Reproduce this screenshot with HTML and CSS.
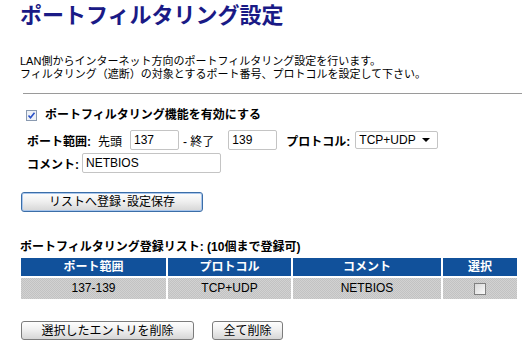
FILE: index.html
```html
<!DOCTYPE html>
<html lang="ja">

<head>
    <meta charset="UTF-8">
    <title>ポートフィルタリング設定</title>
    <link rel="stylesheet" href="styles.css">
</head>

<body>

    <div class="page">
        <h1 class="title">ポートフィルタリング設定</h1>
        <p class="desc">
            LAN側からインターネット方向のポートフィルタリング設定を行います。<br>
            フィルタリング（遮断）の対象とするポート番号、プロトコルを設定して下さい。
        </p>
        <hr class="rule">

        <!-- Filter settings -->
        <form class="settings" onsubmit="return false">
            <label class="enable">
                <input type="checkbox" class="check" checked>
                <span>ポートフィルタリング機能を有効にする</span>
            </label>
            <div class="row">
                <span class="label">ポート範囲:</span>
                <span class="text first">先頭</span>
                <input type="text" class="field port" value="137">
                <span class="text dash">- 終了</span>
                <input type="text" class="field port" value="139">
                <span class="label proto">プロトコル:</span>
                <select class="select">
                    <option>TCP+UDP</option>
                    <option>TCP</option>
                    <option>UDP</option>
                </select>
            </div>
            <div class="row">
                <span class="label">コメント:</span>
                <input type="text" class="field comment" value="NETBIOS">
            </div>
            <button class="btn btn-save">リストへ登録･設定保存</button>
        </form>

        <!-- Registered list -->
        <h2 class="list-title">ポートフィルタリング登録リスト: (10個まで登録可)</h2>
        <table class="list">
            <tr>
                <th class="col-port">ポート範囲</th>
                <th class="col-proto">プロトコル</th>
                <th class="col-comment">コメント</th>
                <th class="col-sel">選択</th>
            </tr>
            <tr>
                <td>137-139</td>
                <td>TCP+UDP</td>
                <td>NETBIOS</td>
                <td><input type="checkbox" class="pick"></td>
            </tr>
        </table>

        <div class="actions">
            <button class="btn btn-del">選択したエントリを削除</button>
            <button class="btn btn-all">全て削除</button>
        </div>
    </div>

</body>

</html>
```

FILE: styles.css
```css
* {
    margin: 0;
    padding: 0;
    box-sizing: border-box;
}

body {
    font-family: "Liberation Sans", "Noto Sans CJK JP", sans-serif;
    font-size: 12px;
    color: #000;
    background: #fff;
}

.page {
    padding: 0 5px 0 20px;
}

.title {
    padding-top: 3px;
    font-size: 22px;
    line-height: 26px;
    font-weight: bold;
    color: #1a1a86;
}

.desc {
    margin-top: 26px;
    font-size: 11px;
    line-height: 13px;
}

.rule {
    margin: 12px 0 0 3px;
    border: none;
    border-top: 1px solid #9a9a9a;
    height: 0;
}

.settings {
    display: flex;
    flex-direction: column;
    align-items: flex-start;
}

.enable {
    display: flex;
    align-items: center;
    margin: 13px 0 0 6px;
    line-height: 16px;
    font-weight: bold;
}

.check {
    appearance: none;
    width: 11px;
    height: 11px;
    margin-right: 8px;
    border: 1px solid #8a9ab0;
    background: #eef1f6 url("data:image/svg+xml,%3Csvg xmlns='http://www.w3.org/2000/svg' viewBox='0 0 9 9'%3E%3Cpath d='M1.5 4.5l2 2.2 4-5' fill='none' stroke='%232850c8' stroke-width='1.6'/%3E%3C/svg%3E") center / 9px 9px no-repeat;
}

.row {
    display: flex;
    align-items: center;
    height: 20px;
    margin: 7px 0 0 7px;
}

.row + .row {
    margin-top: 3px;
}

.label {
    font-weight: bold;
}

.text.first {
    margin-left: 7px;
}

.dash {
    margin: 0 6px 0 4px;
}

.proto {
    margin-left: 9px;
}

.field {
    height: 20px;
    margin-left: 8px;
    padding: 0 3px;
    border: 1px solid #c4c4c4;
    border-radius: 2px;
    font-family: "Liberation Sans", sans-serif;
    font-size: 12px;
    color: #000;
    outline: none;
}

.port {
    width: 49px;
}

.comment {
    width: 139px;
    margin-left: 3px;
}

.select {
    appearance: none;
    width: 83px;
    height: 18px;
    margin-left: 5px;
    padding: 0 3px;
    border: 1px solid #c4c4c4;
    border-radius: 2px;
    font-family: "Liberation Sans", sans-serif;
    font-size: 12px;
    color: #000;
    background: #fff url("data:image/svg+xml,%3Csvg xmlns='http://www.w3.org/2000/svg' viewBox='0 0 8 4'%3E%3Cpath d='M0 0h8L4 4z' fill='%23000'/%3E%3C/svg%3E") right 7px center / 8px 4px no-repeat;
}

.btn {
    height: 19px;
    border: 1px solid #7c7c7c;
    border-radius: 3px;
    background: linear-gradient(#fefefe, #f0f0f0 45%, #d6d6d6);
    font-family: "Liberation Sans", "Noto Sans CJK JP", sans-serif;
    font-size: 12px;
    line-height: 16px;
    color: #000;
    cursor: pointer;
}

.btn-save {
    width: 182px;
    height: 20px;
    margin: 19px 0 0 1px;
    border-color: #3b6ea8;
    box-shadow: inset 0 0 0 1px #a9c6ec;
}

.list-title {
    margin-top: 27px;
    font-size: 12px;
    line-height: 16px;
    font-weight: bold;
}

.list {
    margin: 1px 0 0 -1px;
    border-collapse: separate;
    border-spacing: 2px;
}

.list th {
    height: 18px;
    background: #11519b;
    color: #fff;
    font-weight: bold;
    text-align: center;
    line-height: 18px;
}

.list td {
    height: 21px;
    background: repeating-conic-gradient(#c2c2c2 0 25%, #d2d2d2 0 50%) 0 0 / 2px 2px;
    text-align: center;
    line-height: 21px;
}

.col-port {
    width: 145px;
}

.col-proto {
    width: 123px;
}

.col-comment {
    width: 148px;
}

.col-sel {
    width: 74px;
}

.pick {
    appearance: none;
    display: block;
    width: 12px;
    height: 12px;
    margin: 0 auto;
    border: 1px solid #808080;
    background: linear-gradient(135deg, #d8d8d8, #fafafa);
}

.actions {
    display: flex;
    gap: 18px;
    margin: 20px 0 0 1px;
}

.btn-del {
    width: 173px;
}

.btn-all {
    width: 71px;
}
```
